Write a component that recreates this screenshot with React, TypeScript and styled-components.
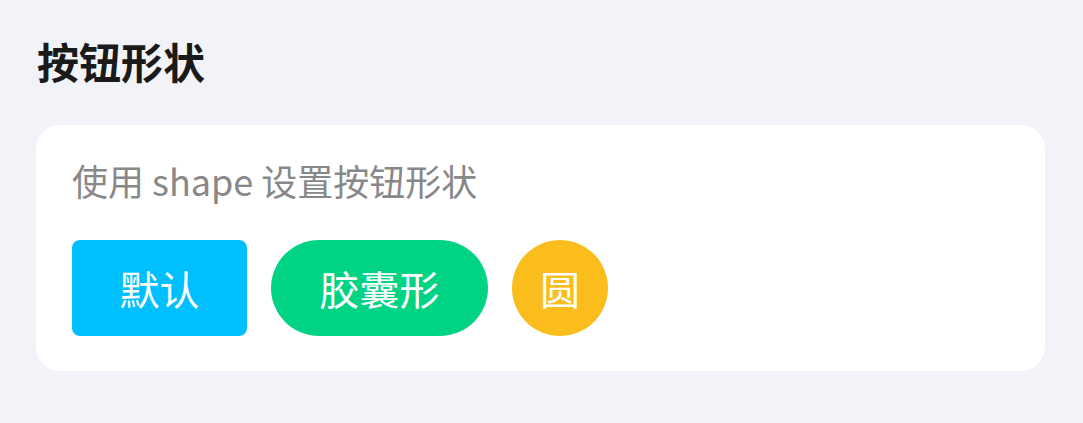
import React from 'react';
import styled, { createGlobalStyle } from 'styled-components';

const GlobalStyle = createGlobalStyle`
  html, body {
    margin: 0;
    padding: 0;
    background: #f2f3f8;
    font-family: "Noto Sans CJK SC", "Noto Sans", sans-serif;
  }
`;

const Page = styled.div`
  padding: 37px 38px 0 36px;
`;

const Title = styled.h2`
  margin: 0 0 41px 1px;
  font-size: 42px;
  line-height: 47px;
  font-weight: 700;
  color: #1a1a1a;
`;

const Card = styled.div`
  background: #ffffff;
  border-radius: 24px;
  padding: 33px 36px 35px;
  display: flex;
  flex-direction: column;
  gap: 37px;
`;

const Description = styled.div`
  font-size: 36px;
  line-height: 45px;
  color: #888888;
`;

const ButtonRow = styled.div`
  display: flex;
  gap: 24px;
  align-items: center;
`;

type Shape = 'square' | 'round' | 'circle';

const paddings: Record<Shape, string> = {
  square: '0 47.5px',
  round: '0 48.5px',
  circle: '0',
};

const ShapeButton = styled.button<{ $shape: Shape; $color: string }>`
  height: 96px;
  min-width: 96px;
  padding: ${(p) => paddings[p.$shape]};
  border: none;
  border-radius: ${(p) => (p.$shape === 'square' ? '8px' : '48px')};
  background: ${(p) => p.$color};
  color: #ffffff;
  font-family: "Noto Sans CJK SC", sans-serif;
  font-size: 40px;
  line-height: 1;
  display: flex;
  align-items: center;
  justify-content: center;
`;

export default function App() {
  return (
    <>
      <GlobalStyle />
      <Page>
        <Title>按钮形状</Title>
        <Card>
          <Description>使用 shape 设置按钮形状</Description>
          <ButtonRow>
            <ShapeButton $shape="square" $color="#00bfff">默认</ShapeButton>
            <ShapeButton $shape="round" $color="#00d384">胶囊形</ShapeButton>
            <ShapeButton $shape="circle" $color="#fbbd1c">圆</ShapeButton>
          </ButtonRow>
        </Card>
      </Page>
    </>
  );
}
